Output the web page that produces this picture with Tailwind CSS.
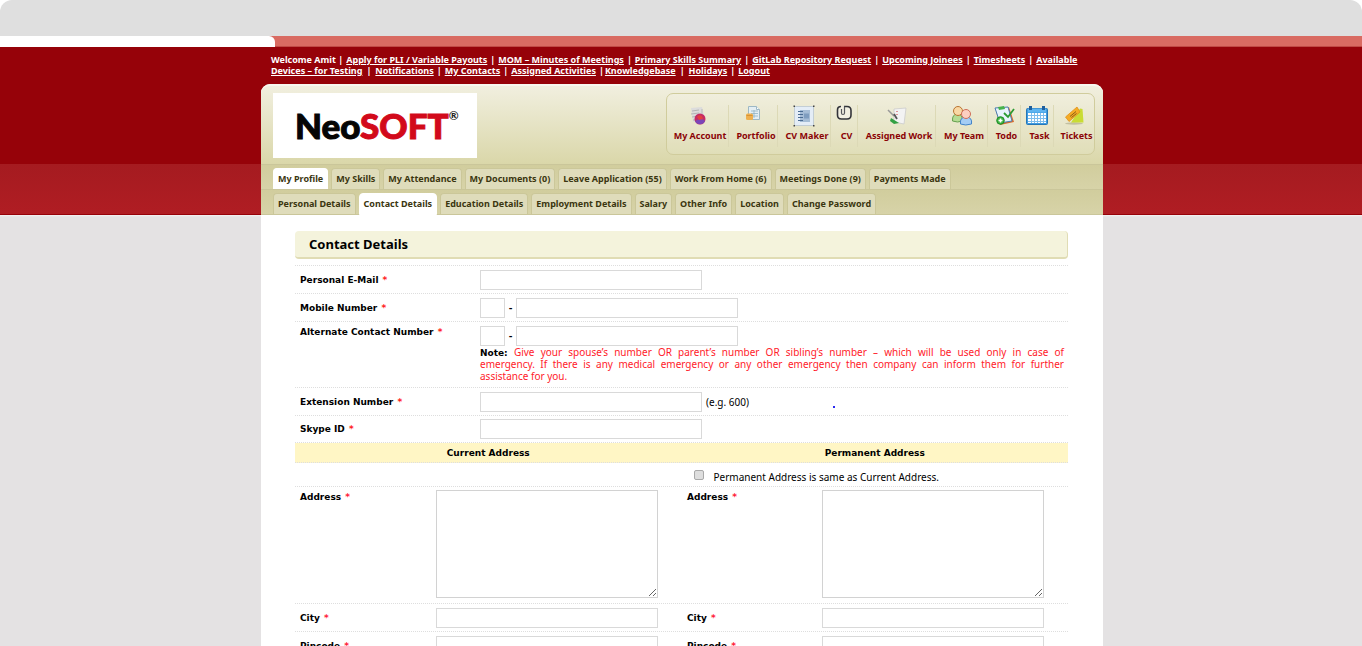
<!DOCTYPE html>
<html lang="en">
<head>
<meta charset="utf-8">
<title>NeoSOFT - Contact Details</title>
<script src="https://cdn.jsdelivr.net/npm/@tailwindcss/browser@4"></script>
</head>
<body class="bg-white font-['Noto_Sans','Open_Sans',sans-serif] text-black">
<div class="flex h-screen flex-col overflow-hidden">
  <!-- window chrome -->
  <div class="h-[36px] shrink-0 rounded-t-[12px] bg-[#dfdfdf]"></div>
  <div class="h-[11px] shrink-0 border-b border-[#c04a45] bg-[#d96b62]">
    <div class="h-[11px] w-[275px] rounded-tr-[6px] bg-white"></div>
  </div>

  <div class="grow bg-[linear-gradient(to_bottom,#960209_0px,#960209_117px,#a51b20_117px,#b01d23_167px,#960209_167px,#960209_168px,#f4f2f3_168px,#e4e2e3_170px)]">
    <div class="mx-auto w-[844px] pl-[2px]">
      <nav class="flex flex-col gap-px px-[10px] pt-2 text-[9px] leading-[10px] font-bold whitespace-nowrap text-white">
        <div class="flex gap-[3px]">
          <span>Welcome Amit |</span>
          <a href="#" class="underline">Apply for PLI / Variable Payouts</a><span>|</span>
          <a href="#" class="underline">MOM – Minutes of Meetings</a><span>|</span>
          <a href="#" class="underline">Primary Skills Summary</a><span>|</span>
          <a href="#" class="underline">GitLab Repository Request</a><span>|</span>
          <a href="#" class="underline">Upcoming Joinees</a><span>|</span>
          <a href="#" class="underline">Timesheets</a><span>|</span>
          <a href="#" class="underline">Available</a>
        </div>
        <div class="flex gap-[3px]">
          <a href="#" class="underline">Devices – for Testing</a><span class="px-px">|</span>
          <a href="#" class="underline">Notifications</a><span>|</span>
          <a href="#" class="underline">My Contacts</a><span>|<a href="#" class="ml-[3px] underline">Assigned Activities</a></span>
          <span>|<a href="#" class="ml-px underline">Knowledgebase</a></span><span class="px-px">|</span>
          <a href="#" class="underline">Holidays</a><span>|</span>
          <a href="#" class="underline">Logout</a>
        </div>
      </nav>

      <div class="mt-2 min-h-screen rounded-t-[9px] bg-white">
        <header class="flex h-[80px] items-start justify-between rounded-t-[9px] border-t-2 border-[#f8f7ee] bg-linear-to-b from-[#f1efdf] to-[#dad7a9] pr-2 pl-3">
          <div class="mt-[7px] flex h-[65px] w-[204px] items-start bg-white pt-[11px] pl-[22px] font-['Lato',sans-serif] font-black text-[#050505]">
            <span class="text-[35px] leading-[42px] [-webkit-text-stroke:1px_currentColor]">Neo<span class="text-[#d20a1b]">SOFT</span></span>
            <span class="text-[12px] leading-6 font-bold text-[#222]">®</span>
          </div>
          <nav class="mt-[7px] grid h-[62px] w-[429px] grid-cols-[62px_49px_53px_27px_78px_52px_33px_33px_1fr] rounded-[7px] border border-[#d0cc9c] bg-white/10 pt-[11px] text-[9px] leading-3 font-bold whitespace-nowrap text-[#8b0306]">
            <a href="#" class="flex h-[42px] flex-col items-center gap-[3px] border-r border-[#dcd9b6]">
              <svg viewBox="0 0 22 22" class="size-[22px]"><path d="M4 3l11-1 3 12-12 3z" fill="#dcdcdc"/><path d="M5 6l7-1M4 9l8-1M5 12l7-1M6 15h5" stroke="#b5b5b5"/><path d="M15 4v5" stroke="#bbb"/><circle cx="13" cy="14" r="5.500" fill="#c52c66"/><path d="M8 16a5.500 5.500 0 0 0 10 0c-3-3-6-2-10 0z" fill="#7b46b8"/><path d="M10 12c1-2 3-2 5-1l1 3-4 1z" fill="#e2403f"/></svg>
              <span class="pl-[5px]">My Account</span></a>
            <a href="#" class="flex h-[42px] flex-col items-center gap-[3px] border-r border-[#dcd9b6]">
              <svg viewBox="0 0 22 22" class="size-[22px]"><path d="M6.500 1.500h8l3 3v10h-11z" fill="#e4eef3" stroke="#9db8c5"/><path d="M14.500 1.500v3h3" fill="#fff" stroke="#9db8c5"/><path d="M9 6h7M9 8.500h7M9 11h7M12 5v8" stroke="#8fb3c5" stroke-width=".8"/><rect x="4" y="8.500" width="7" height="6.500" rx="1.500" fill="#eeb04f"/><path d="M4.500 10.500h6" stroke="#d08c30" stroke-width=".8"/></svg>
              <span class="pl-[6px]">Portfolio</span></a>
            <a href="#" class="flex h-[42px] flex-col items-center gap-[3px] border-r border-[#dcd9b6]">
              <svg viewBox="0 0 22 22" class="size-[22px]"><rect x="1.500" y="1.500" width="19" height="19" fill="#e4edf7" stroke="#9fb0c4" stroke-dasharray="1 1"/><path d="M.5.5h1.500v1.500H.5zM20 .5h1.500v1.500H20zM.5 20h1.500v1.500H.5zM20 20h1.500v1.500H20z" fill="#444"/><path d="M7 5h10v12H7z" fill="#a5bdd6"/><path d="M5 6.500h5M5 9.500h5M5 12.500h5M5 15.500h5" stroke="#4a6c93"/><path d="M11 8.500h5v5h-5z" fill="#7e9dbf"/></svg>
              <span class="pl-[6px]">CV Maker</span></a>
            <a href="#" class="flex h-[42px] flex-col items-center gap-[3px] border-r border-[#dcd9b6]">
              <svg viewBox="0 0 22 22" class="size-[22px]"><path d="M8 1.500H8q-3.500 0-3.500 3.500v5q0 4 4 4h5.500q4 0 4-4V5.500q0-4-4-4h-3" fill="#f2f0e2" stroke="#33343a" stroke-width="1.600"/><path d="M8.500 4v4q0 1.500 1.500 1.500t1.500-1.500V1.500" fill="none" stroke="#55565b" stroke-width="1.200"/></svg>
              <span class="pl-[5px]">CV</span></a>
            <a href="#" class="flex h-[42px] flex-col items-center gap-[3px] border-r border-[#dcd9b6]">
              <svg viewBox="0 0 22 22" class="size-[22px]"><path d="M8 4l12-1-2 16-10-2z" fill="#f3f3f3" stroke="#ccc" stroke-width=".8"/><path d="M11 6v1M11 9v1" stroke="#d9757b" stroke-width="1.500"/><path d="M2 5l6 6" stroke="#999" stroke-width="1.500"/><path d="M8 9l3 5" stroke="#555" stroke-width="1.800"/><path d="M5 13l8 5-5 1-4-3z" fill="#33a043"/></svg>
              <span class="pl-[5px]">Assigned Work</span></a>
            <a href="#" class="flex h-[42px] flex-col items-center gap-[3px] border-r border-[#dcd9b6]">
              <svg viewBox="0 0 22 22" class="size-[22px]"><path d="M1.500 16q-.5-7 5-7 5 0 5 7-5 2-10 0z" fill="#b5dc94" stroke="#65a04f"/><circle cx="7" cy="6" r="4.500" fill="#f9d8a4" stroke="#b97432"/><path d="M9.500 19q-1-7 5.500-7t5.500 7q-6 2-11 0z" fill="#a5cdf4" stroke="#4384c9"/><circle cx="15" cy="9" r="4.500" fill="#fccfc0" stroke="#cf6e57"/></svg>
              <span class="pl-[5px]">My Team</span></a>
            <a href="#" class="flex h-[42px] flex-col items-center gap-[3px] border-r border-[#dcd9b6]">
              <svg viewBox="0 0 22 22" class="size-[22px]"><path d="M2 3l14-1 5 15-14 3z" fill="#d96a2b"/><path d="M2 3l13-1 4 14-12 2z" fill="#e8f3fb" stroke="#4b7fb4"/><path d="M5 2l6-1 1 3-6 1z" fill="#46b24b"/><path d="M11 8l4 4 6-8" fill="none" stroke="#2a9a31" stroke-width="1.800"/><circle cx="7.500" cy="15.500" r="3.800" fill="#3cb43f" stroke="#1e8a28"/><path d="M7.500 13.500v4M5.500 15.500h4" stroke="#fff" stroke-width="1.600"/></svg>
              <span class="pl-[5px]">Todo</span></a>
            <a href="#" class="flex h-[42px] flex-col items-center gap-[3px] border-r border-[#dcd9b6]">
              <svg viewBox="0 0 22 22" class="size-[22px]"><rect x=".5" y="3.500" width="21" height="16" rx="1" fill="#3f9be0" stroke="#2677b8"/><path d="M2 3.500h18v4H2z" fill="#5eb4f0"/><path d="M3 1h3v4H3zM16 1h3v4h-3z" fill="#1f5f9d"/><path d="M2 8h18v10H2z" fill="#fff"/><path d="M2 10.500h18M2 13.500h18M2 16.500h18M5.500 8v10M8.500 8v10M11.500 8v10M14.500 8v10M17.500 8v10" stroke="#7dbdec"/></svg>
              <span class="pl-[5px]">Task</span></a>
            <a href="#" class="flex h-[42px] flex-col items-center gap-[3px]">
              <svg viewBox="0 0 22 22" class="size-[22px]"><ellipse cx="11" cy="18.500" rx="9" ry="1.200" fill="#c2bf9f"/><path d="M8 17.500L17 3.500l2.500.5 1 13.500z" fill="#c9dc34"/><path d="M2.500 12L14 2l3 5L6 16.500z" fill="#f5ac25" stroke="#e0921a" stroke-width=".8"/><path d="M7 11.500l6-5M8.500 12.500l5-4" stroke="#6d4a12" stroke-width=".8"/></svg>
              <span class="pl-[5px]">Tickets</span></a>
          </nav>
        </header>

        <nav class="flex h-[26px] items-end gap-[3px] border-y border-[#cac69a] bg-linear-to-b from-[#d1cd9d] to-[#d7d3a8] px-[12px] text-[9px] leading-5 font-bold whitespace-nowrap text-[#3b3610]">
          <a href="#" class="rounded-t-[4px] border border-b-0 border-white bg-white px-1">My Profile</a>
          <a href="#" class="rounded-t-[4px] border border-b-0 border-[#cbc799] bg-[#dfdcbb] px-1">My Skills</a>
          <a href="#" class="rounded-t-[4px] border border-b-0 border-[#cbc799] bg-[#dfdcbb] px-1">My Attendance</a>
          <a href="#" class="rounded-t-[4px] border border-b-0 border-[#cbc799] bg-[#dfdcbb] px-1">My Documents (0)</a>
          <a href="#" class="rounded-t-[4px] border border-b-0 border-[#cbc799] bg-[#dfdcbb] px-1">Leave Application (55)</a>
          <a href="#" class="rounded-t-[4px] border border-b-0 border-[#cbc799] bg-[#dfdcbb] px-1">Work From Home (6)</a>
          <a href="#" class="rounded-t-[4px] border border-b-0 border-[#cbc799] bg-[#dfdcbb] px-1">Meetings Done (9)</a>
          <a href="#" class="rounded-t-[4px] border border-b-0 border-[#cbc799] bg-[#dfdcbb] px-1">Payments Made</a>
        </nav>
        <nav class="flex h-[25px] items-end gap-[3px] border-b border-[#cac69a] bg-linear-to-b from-[#d1cd9d] to-[#d7d3a8] px-[12px] text-[9px] leading-5 font-bold whitespace-nowrap text-[#3b3610]">
          <a href="#" class="rounded-t-[4px] border border-b-0 border-[#cbc799] bg-[#dfdcbb] px-1">Personal Details</a>
          <a href="#" class="-mb-px rounded-t-[4px] border border-white bg-white px-1">Contact Details</a>
          <a href="#" class="rounded-t-[4px] border border-b-0 border-[#cbc799] bg-[#dfdcbb] px-1">Education Details</a>
          <a href="#" class="rounded-t-[4px] border border-b-0 border-[#cbc799] bg-[#dfdcbb] px-1">Employment Details</a>
          <a href="#" class="rounded-t-[4px] border border-b-0 border-[#cbc799] bg-[#dfdcbb] px-1">Salary</a>
          <a href="#" class="rounded-t-[4px] border border-b-0 border-[#cbc799] bg-[#dfdcbb] px-1">Other Info</a>
          <a href="#" class="rounded-t-[4px] border border-b-0 border-[#cbc799] bg-[#dfdcbb] px-1">Location</a>
          <a href="#" class="rounded-t-[4px] border border-b-0 border-[#cbc799] bg-[#dfdcbb] px-1">Change Password</a>
        </nav>

        <main class="pt-4 pr-[35px] pl-[34px]">
          <h1 class="rounded-[4px] border-r border-b-2 border-[#e0dcb4] bg-[#f4f3dc] pl-[14px] text-[13px] leading-[26px] font-bold">Contact Details</h1>

          <form class="mt-[6px] border-t border-dotted border-[#dedede] font-['DejaVu_Sans',Verdana,sans-serif] text-[9px] leading-3">
            <div class="grid h-[28px] grid-cols-[180px_1fr] items-center border-b border-dotted border-[#dedede] pl-[5px]">
              <label for="email" class="font-bold">Personal E-Mail <span class="ml-px text-[#ff2020]">*</span></label>
              <div class="flex"><input id="email" type="text" class="h-5 w-[222px] border border-[#d9d9d9]"></div>
            </div>
            <div class="grid h-[28px] grid-cols-[180px_1fr] items-center border-b border-dotted border-[#dedede] pl-[5px]">
              <label for="mobile" class="font-bold">Mobile Number <span class="ml-px text-[#ff2020]">*</span></label>
              <div class="flex items-center gap-[3px]"><input type="text" aria-label="Mobile country code" class="h-5 w-[25px] border border-[#d9d9d9]"><span class="w-[5px] text-center font-bold">-</span><input id="mobile" type="text" class="h-5 w-[222px] border border-[#d9d9d9]"></div>
            </div>
            <div class="grid h-[66px] grid-cols-[180px_1fr] items-start border-b border-dotted border-[#dedede] pt-1 pl-[5px]">
              <label for="alt" class="font-bold">Alternate Contact Number <span class="ml-px text-[#ff2020]">*</span></label>
              <div>
                <div class="flex items-center gap-[3px]"><input type="text" aria-label="Alternate country code" class="h-5 w-[25px] border border-[#d9d9d9]"><span class="w-[5px] text-center font-bold">-</span><input id="alt" type="text" class="h-5 w-[222px] border border-[#d9d9d9]"></div>
                <p class="pr-1 font-['Noto_Sans','Open_Sans',sans-serif] text-[10px] leading-3 text-[#ff1a2a]">
                  <span class="block h-3 [text-align-last:justify]"><b class="font-['DejaVu_Sans',Verdana,sans-serif] text-[9px] text-black">Note:</b> Give your spouse’s number OR parent’s number OR sibling’s number – which will be used only in case of</span>
                  <span class="block [text-align-last:justify]">emergency. If there is any medical emergency or any other emergency then company can inform them for further</span>
                  <span class="block">assistance for you.</span>
                </p>
              </div>
            </div>
            <div class="grid h-[28px] grid-cols-[180px_1fr] items-center border-b border-dotted border-[#dedede] pl-[5px]">
              <label for="ext" class="font-bold">Extension Number <span class="ml-px text-[#ff2020]">*</span></label>
              <div class="flex items-center gap-1"><input id="ext" type="text" class="h-5 w-[222px] border border-[#d9d9d9]"><span class="font-['Noto_Sans','Open_Sans',sans-serif] text-[10px]">(e.g. 600)</span><span class="mt-[10px] ml-20 size-[2px] bg-[#2a2af0]"></span></div>
            </div>
            <div class="grid h-[27px] grid-cols-[180px_1fr] items-center border-b border-dotted border-[#dedede] pl-[5px]">
              <label for="skype" class="font-bold">Skype ID <span class="ml-px text-[#ff2020]">*</span></label>
              <div class="flex"><input id="skype" type="text" class="h-5 w-[222px] border border-[#d9d9d9]"></div>
            </div>

            <div class="grid h-5 grid-cols-2 items-center border-b border-dotted border-[#dedede] bg-[#fff6c5] text-center font-bold">
              <h2>Current Address</h2>
              <h2>Permanent Address</h2>
            </div>
            <div class="grid h-6 grid-cols-2 border-b border-dotted border-[#dedede]">
              <div></div>
              <div class="flex items-start pl-3">
                <input id="same" type="checkbox" class="mt-[7px] size-[10px] appearance-none rounded-[2px] border border-[#a9a9a9] bg-[#dedede]">
                <label for="same" class="mt-2 pl-[10px] font-['Noto_Sans','Open_Sans',sans-serif] text-[10px]">Permanent Address is same as Current Address.</label>
              </div>
            </div>
            <div class="grid h-[117px] grid-cols-[136px_251px_135px_1fr] items-start border-b border-dotted border-[#dedede] pt-[3px] pl-[5px]">
              <label for="caddr" class="pt-px font-bold">Address <span class="ml-px text-[#ff2038]">*</span></label>
              <textarea id="caddr" class="h-[108px] w-[222px] border border-[#d2d2d2]"></textarea>
              <label for="paddr" class="pt-px font-bold">Address <span class="ml-px text-[#ff2038]">*</span></label>
              <textarea id="paddr" class="h-[108px] w-[222px] border border-[#d2d2d2]"></textarea>
            </div>
            <div class="grid h-[28px] grid-cols-[136px_251px_135px_1fr] items-center border-b border-dotted border-[#dedede] pl-[5px]">
              <label for="ccity" class="font-bold">City <span class="ml-px text-[#ff2038]">*</span></label>
              <input id="ccity" type="text" class="h-5 w-[222px] border border-[#d9d9d9]">
              <label for="pcity" class="font-bold">City <span class="ml-px text-[#ff2038]">*</span></label>
              <input id="pcity" type="text" class="h-5 w-[222px] border border-[#d9d9d9]">
            </div>
            <div class="grid h-[28px] grid-cols-[136px_251px_135px_1fr] items-center border-b border-dotted border-[#dedede] pl-[5px]">
              <label for="cpin" class="font-bold">Pincode <span class="ml-px text-[#ff2038]">*</span></label>
              <input id="cpin" type="text" class="h-5 w-[222px] border border-[#d9d9d9]">
              <label for="ppin" class="font-bold">Pincode <span class="ml-px text-[#ff2038]">*</span></label>
              <input id="ppin" type="text" class="h-5 w-[222px] border border-[#d9d9d9]">
            </div>
          </form>
        </main>
      </div>
    </div>
  </div>
</div>
</body>
</html>
